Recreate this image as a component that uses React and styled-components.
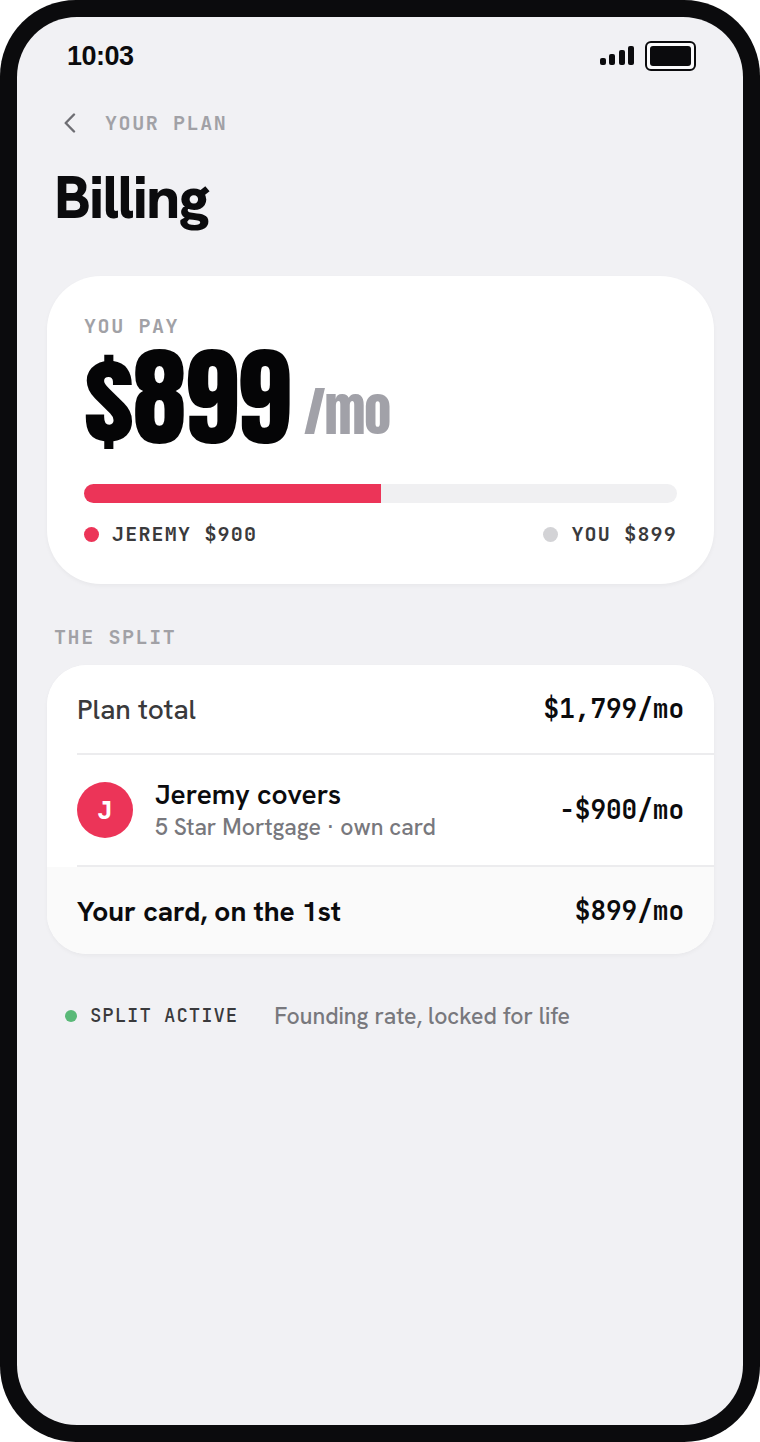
import React from "react";
import styled, { createGlobalStyle } from "styled-components";

const GlobalStyle = createGlobalStyle`
  * {
    box-sizing: border-box;
  }
  body {
    margin: 0;
    background: #fff;
    color: #0b0b0d;
    font-family: "Hanken Grotesk", "HK Grotesk", Roboto, "Liberation Sans", sans-serif;
  }
`;

const Phone = styled.div`
  min-height: 100vh;
  display: flex;
  padding: 17px;
  background: #0b0b0d;
  border-radius: 76px;
`;

const Screen = styled.main`
  flex: 1;
  min-width: 0;
  padding: 22px 29px 30px 30px;
  background: #f1f1f4;
  border-radius: 60px;
`;

const StatusBar = styled.div`
  display: flex;
  justify-content: space-between;
  align-items: center;
  height: 34px;
  padding: 0 18px 0 20px;
`;

const Clock = styled.span`
  font-family: "Liberation Sans", Arial, sans-serif;
  font-size: 27px;
  font-weight: 700;
  letter-spacing: -0.02em;
`;

const StatusIcons = styled.div`
  display: flex;
  align-items: center;
  gap: 11px;
  svg {
    display: block;
  }
`;

const mono = `
  font-family: "JetBrains Mono", "DejaVu Sans Mono", "Liberation Mono", monospace;
`;

const Label = styled.span`
  ${mono}
  display: block;
  font-size: 20px;
  line-height: 24px;
  font-weight: 600;
  letter-spacing: 0.08em;
  color: #a1a1a6;
`;

const NavRow = styled.nav`
  display: flex;
  align-items: center;
  gap: 12px;
  height: 46px;
  margin-top: 27px;
`;

const BackButton = styled.button`
  width: 46px;
  height: 46px;
  padding: 0;
  display: flex;
  justify-content: center;
  align-items: center;
  border: none;
  background: none;
  color: #6e6e73;
  cursor: pointer;
`;

const Title = styled.h1`
  margin: 19px 7px 0;
  font-size: 60px;
  line-height: 64px;
  font-weight: 800;
  letter-spacing: -0.03em;
`;

const Card = styled.section`
  background: #fff;
  border-radius: ${(props) => props.$radius};
  box-shadow: 0 2px 4px rgba(0, 0, 0, 0.04);
  overflow: hidden;
`;

const PayCard = styled(Card)`
  margin-top: 47px;
  padding: 38px 37px;
`;

const Price = styled.p`
  display: flex;
  align-items: flex-end;
  gap: 14px;
  margin: 0;
  font-family: Anton, Impact, Roboto, sans-serif;
  font-size: 108px;
  line-height: 120px;
  font-weight: 400;
  letter-spacing: -0.01em;
  color: #050506;
  small {
    font-size: 54px;
    line-height: 94px;
    color: #a1a1a8;
  }
`;

const Track = styled.div`
  height: 19px;
  margin-top: 26px;
  border-radius: 10px;
  background: #f0f0f2;
  overflow: hidden;
`;

const Fill = styled.div`
  height: 100%;
  background: #ec3458;
`;

const Legend = styled.div`
  display: flex;
  justify-content: space-between;
  margin-top: 19px;
`;

const Key = styled.div`
  display: flex;
  align-items: center;
  gap: 13px;
`;

const KeyLabel = styled(Label)`
  letter-spacing: 0.06em;
  color: #3a3a3c;
`;

const Dot = styled.span`
  width: ${(props) => props.$size};
  height: ${(props) => props.$size};
  border-radius: 50%;
  background: ${(props) => props.color};
`;

const SectionTitle = styled.h2`
  margin: 41px 7px 16px;
`;

const Row = styled.div`
  padding-left: 30px;
  background: ${(props) => (props.$total ? "#fafafa" : "#fff")};
`;

const RowInner = styled.div`
  display: flex;
  align-items: center;
  gap: 22px;
  min-height: ${(props) => props.$height};
  padding-right: 30px;
  border-bottom: ${(props) => (props.$last ? "none" : "2px solid #ececee")};
`;

const RowText = styled.div`
  flex: 1;
`;

const RowName = styled.div`
  font-size: 28px;
  line-height: 34px;
  font-weight: ${(props) => props.$weight || 500};
  color: ${(props) => props.color || "#0b0b0d"};
`;

const RowNote = styled.div`
  font-size: 23px;
  line-height: 32px;
  font-weight: 500;
  color: #78787d;
`;

const Amount = styled.span`
  ${mono}
  font-size: 26px;
  line-height: 34px;
  font-weight: 700;
`;

const Avatar = styled.div`
  width: 56px;
  height: 56px;
  display: flex;
  justify-content: center;
  align-items: center;
  border-radius: 50%;
  background: #ec3458;
  color: #fff;
  ${mono}
  font-size: 24px;
  font-weight: 800;
`;

const Footer = styled.footer`
  display: flex;
  align-items: center;
  gap: 36px;
  margin-top: 46px;
  padding-left: 18px;
`;

const Status = styled(KeyLabel)`
  font-size: 19px;
  font-weight: 500;
  letter-spacing: 0.05em;
`;

const SPLIT = { total: 1799, jeremy: 900, you: 899 };

const App = () => {
  return (
    <>
      <GlobalStyle />
      <Phone>
        <Screen>
          <StatusBar>
            <Clock>10:03</Clock>
            <StatusIcons>
              <svg width="34" height="20" viewBox="0 0 34 20" fill="#0b0b0d" aria-hidden="true">
                <rect x="0" y="12" width="6" height="7" rx="2" />
                <rect x="9" y="8" width="6" height="11" rx="2" />
                <rect x="19" y="4" width="6" height="15" rx="2" />
                <rect x="28" y="0" width="6" height="19" rx="2" />
              </svg>
              <svg width="51" height="30" viewBox="0 0 51 30" aria-hidden="true">
                <rect x="1" y="1" width="49" height="28" rx="5" fill="#fbfbfc" stroke="#0b0b0d" strokeWidth="2" />
                <rect x="5" y="5" width="41" height="20" rx="3" fill="#0b0b0d" />
              </svg>
            </StatusIcons>
          </StatusBar>

          <NavRow>
            <BackButton type="button" aria-label="Back">
              <svg width="12" height="20" viewBox="0 0 12 20" fill="none" stroke="currentColor" strokeWidth="2.4" strokeLinecap="round" strokeLinejoin="round">
                <path d="M10 1.5 1.7 10l8.3 8.5" />
              </svg>
            </BackButton>
            <Label>YOUR PLAN</Label>
          </NavRow>
          <Title>Billing</Title>

          <PayCard $radius="54px">
            <Label>YOU PAY</Label>
            <Price>
              ${SPLIT.you}
              <small>/mo</small>
            </Price>
            <Track>
              <Fill style={{ width: `${(SPLIT.jeremy / SPLIT.total) * 100}%` }} />
            </Track>
            <Legend>
              <Key>
                <Dot $size="15px" color="#ec3458" />
                <KeyLabel>JEREMY $900</KeyLabel>
              </Key>
              <Key>
                <Dot $size="15px" color="#d3d3d6" />
                <KeyLabel>YOU $899</KeyLabel>
              </Key>
            </Legend>
          </PayCard>

          <SectionTitle>
            <Label>THE SPLIT</Label>
          </SectionTitle>
          <Card $radius="40px">
            <Row>
              <RowInner $height="90px">
                <RowText>
                  <RowName color="#3a3a3c">Plan total</RowName>
                </RowText>
                <Amount>$1,799/mo</Amount>
              </RowInner>
            </Row>
            <Row>
              <RowInner $height="112px">
                <Avatar>J</Avatar>
                <RowText>
                  <RowName $weight={600}>Jeremy covers</RowName>
                  <RowNote>5 Star Mortgage · own card</RowNote>
                </RowText>
                <Amount>-$900/mo</Amount>
              </RowInner>
            </Row>
            <Row $total>
              <RowInner $height="87px" $last>
                <RowText>
                  <RowName $weight={700}>Your card, on the 1st</RowName>
                </RowText>
                <Amount>$899/mo</Amount>
              </RowInner>
            </Row>
          </Card>

          <Footer>
            <Key>
              <Dot $size="12px" color="#5ab978" />
              <Status>SPLIT ACTIVE</Status>
            </Key>
            <RowNote>Founding rate, locked for life</RowNote>
          </Footer>
        </Screen>
      </Phone>
    </>
  );
};

export default App;
